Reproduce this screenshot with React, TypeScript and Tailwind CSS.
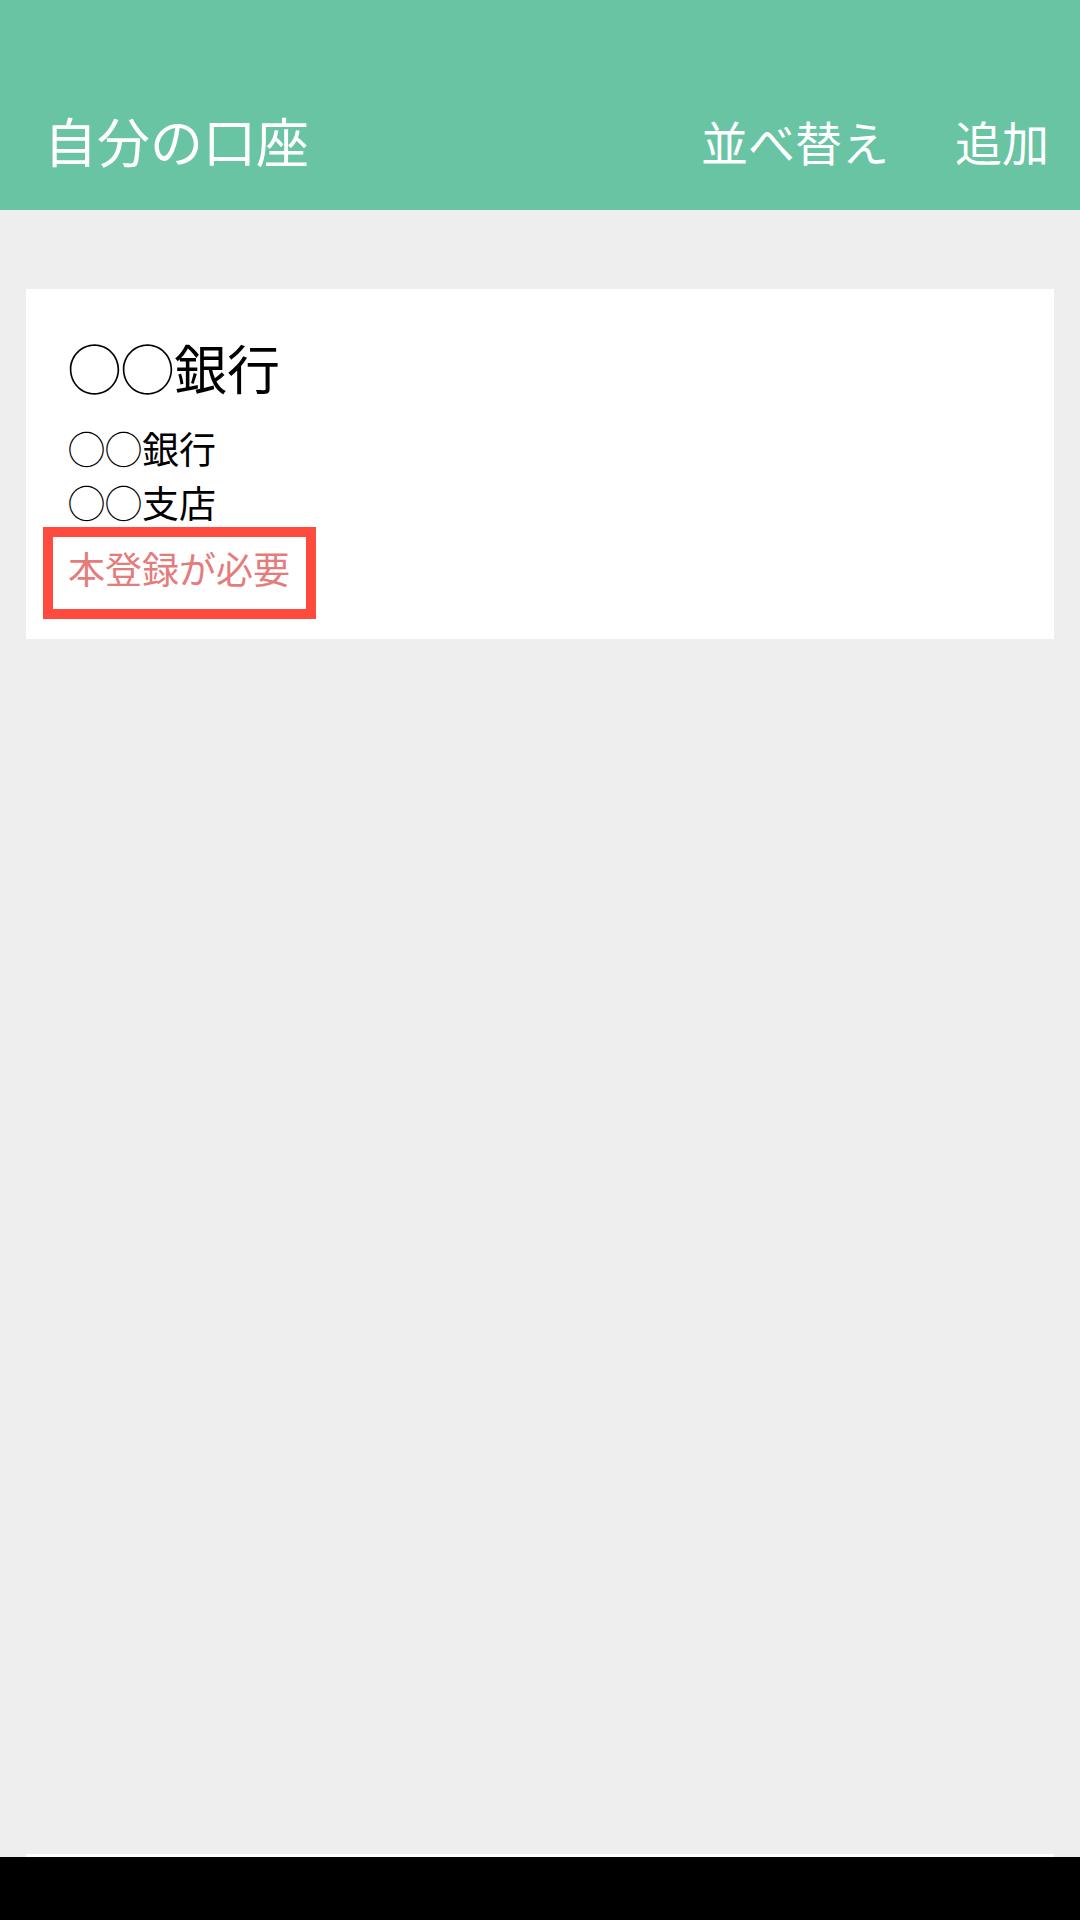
import React from 'react';

const font = { fontFamily: '"Noto Sans CJK JP", "Noto Sans", sans-serif' };

const AccountCard: React.FC = () => {
  return (
    <div className="mx-[26px] bg-white pl-[42px] pt-[52px] pb-[44px]">
      <div className="text-[53px] leading-[52px] text-black">◯◯銀行</div>
      <div className="mt-[28px] text-[37px] leading-[54px] text-black">◯◯銀行</div>
      <div className="text-[37px] leading-[54px] text-black">◯◯支店</div>
      <div className="mt-[12px] flex">
        <div className="relative text-[37px] leading-[54px] text-[#e57c7c]">
          本登録が必要
          <span className="pointer-events-none absolute -left-[25px] -right-[26px] -top-[14px] -bottom-[24px] border-[10px] border-[#ff4a3e]" />
        </div>
      </div>
    </div>
  );
};

const App: React.FC = () => {
  return (
    <div className="flex h-[1920px] w-[1080px] flex-col bg-[#eeeeee]" style={font}>
      <header className="flex h-[210px] items-end bg-[#68c4a2]">
        <div className="flex h-[140px] w-full items-center justify-between pl-[44px] pr-[31px] text-white">
          <h1 className="text-[53px] font-normal leading-none">自分の口座</h1>
          <div className="flex items-center gap-[66px] text-[47px] leading-none">
            <span>並べ替え</span>
            <span>追加</span>
          </div>
        </div>
      </header>
      <main className="flex flex-1 flex-col justify-between pt-[79px]">
        <AccountCard />
        <div className="mx-[26px] h-[3px] bg-white" />
      </main>
      <div className="h-[63px] bg-black" />
    </div>
  );
};

export default App;
